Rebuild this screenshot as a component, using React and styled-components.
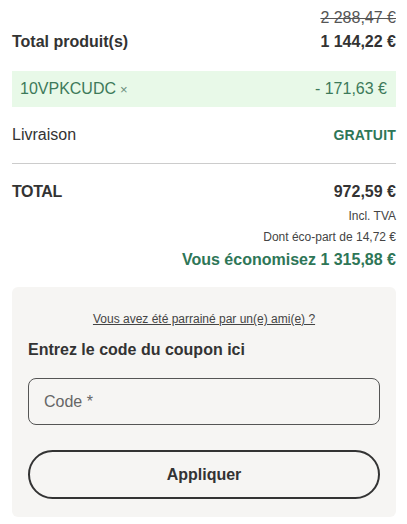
import React from "react";
import styled, { createGlobalStyle } from "styled-components";

const GlobalStyle = createGlobalStyle`
  body {
    margin: 0;
    background: #fff;
    font-family: "Liberation Sans", Arial, sans-serif;
    color: #333;
  }
`;

const Summary = styled.div`
  width: 384px;
  padding: 8px 11px 0 12px;
`;

const OldPrice = styled.div`
  text-align: right;
  font-size: 16px;
  line-height: 20px;
  color: #555;
  text-decoration: line-through;
`;

const Row = styled.div`
  display: flex;
  justify-content: space-between;
  align-items: center;
  height: ${(p) => p.h || 24}px;
  font-size: ${(p) => p.size || 16}px;
  font-weight: ${(p) => (p.bold ? 700 : 400)};
  color: ${(p) => p.color || "#333"};
`;

const Coupon = styled.div`
  display: flex;
  justify-content: space-between;
  align-items: center;
  height: 36px;
  margin: 15px 0 16px;
  padding: 0 9px 0 8px;
  background: #e8f9e8;
  color: #3d7a5a;
  font-size: 16px;
`;

const Remove = styled.span`
  font-size: 13px;
  color: #6a8d7a;
  margin-left: 4px;
`;

const Gratuit = styled.span`
  font-size: 14px;
  font-weight: 700;
  color: #2e7657;
  letter-spacing: 0.2px;
`;

const Divider = styled.hr`
  border: none;
  border-top: 1px solid #ccc;
  margin: 16px 0 14px;
`;

const Note = styled.div`
  text-align: right;
  font-size: 12px;
  line-height: 21px;
  color: #444;
`;

const Savings = styled.div`
  text-align: right;
  font-size: 16px;
  font-weight: 700;
  line-height: 24px;
  color: #2e7657;
`;

const Card = styled.div`
  margin: 15px 11px 0 12px;
  width: 384px;
  box-sizing: border-box;
  background: #f6f5f3;
  border-radius: 6px;
  padding: 23px 16px 18px;
  display: flex;
  flex-direction: column;
`;

const Referral = styled.a`
  align-self: center;
  font-size: 12px;
  line-height: 18px;
  color: #444;
  text-decoration: underline;
`;

const CardTitle = styled.div`
  margin-top: 12px;
  font-size: 16px;
  font-weight: 700;
  line-height: 20px;
  color: #333;
`;

const Input = styled.input`
  margin-top: 18px;
  height: 47px;
  box-sizing: border-box;
  border: 1px solid #555;
  border-radius: 8px;
  background: transparent;
  padding: 0 15px;
  font-family: inherit;
  font-size: 16px;
  color: #333;
  &::placeholder {
    color: #666;
  }
`;

const Button = styled.button`
  margin-top: 25px;
  height: 49px;
  border: 2px solid #333;
  border-radius: 25px;
  background: transparent;
  font-family: inherit;
  font-size: 16px;
  font-weight: 700;
  color: #333;
`;

const Total = styled.span`
  letter-spacing: -0.4px;
`;

export default function App() {
  return (
    <>
      <GlobalStyle />
      <Summary>
        <OldPrice>2 288,47 €</OldPrice>
        <Row bold h={28}>
          <span>Total produit(s)</span>
          <span>1 144,22 €</span>
        </Row>
        <Coupon>
          <span>
            10VPKCUDC<Remove>×</Remove>
          </span>
          <span>- 171,63 €</span>
        </Coupon>
        <Row h={24}>
          <span>Livraison</span>
          <Gratuit>GRATUIT</Gratuit>
        </Row>
        <Divider />
        <Row bold h={28}>
          <Total>TOTAL</Total>
          <span>972,59 €</span>
        </Row>
        <Note>Incl. TVA</Note>
        <Note>Dont éco-part de 14,72 €</Note>
        <Savings>Vous économisez 1 315,88 €</Savings>
      </Summary>
      <Card>
        <Referral href="#">Vous avez été parrainé par un(e) ami(e) ?</Referral>
        <CardTitle>Entrez le code du coupon ici</CardTitle>
        <Input placeholder="Code *" />
        <Button>Appliquer</Button>
      </Card>
    </>
  );
}
